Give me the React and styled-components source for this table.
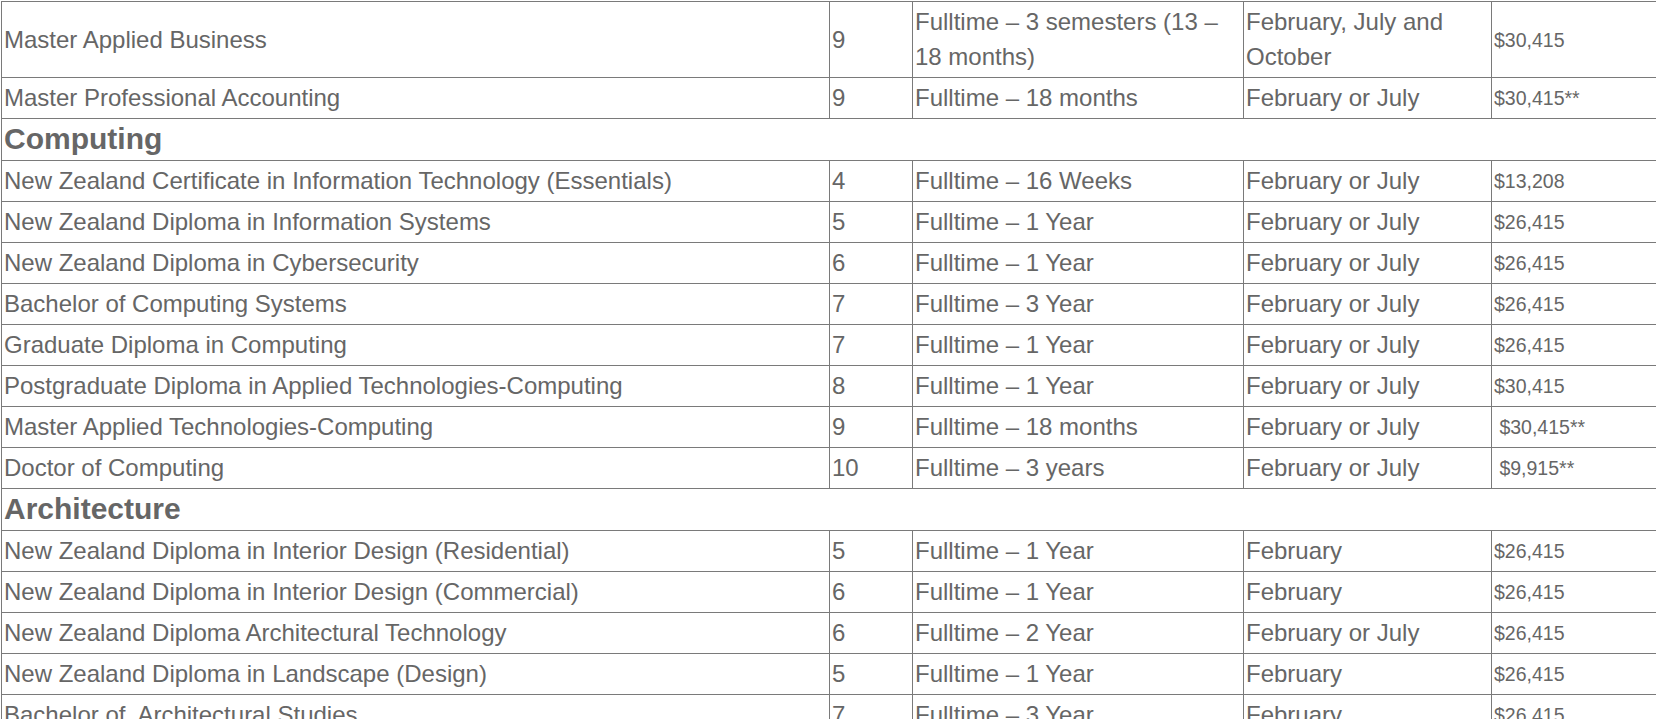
import React from "react";
import styled, { createGlobalStyle } from "styled-components";

const Global = createGlobalStyle`
  html, body {
    margin: 0;
    padding: 0;
    overflow: hidden;
    background: #ffffff;
  }
`;

const Page = styled.div`
  padding: 1px 0 0 1px;
  width: 1800px;
`;

const Table = styled.table`
  border-collapse: collapse;
  table-layout: fixed;
  width: 1750px;
  font-family: "Liberation Sans", Arial, sans-serif;
  color: #666666;
`;

const Col = styled.col`
  width: ${(p) => p.$w}px;
`;

const Cell = styled.td`
  border: 1px solid #7a7a7a;
  padding: 2px 2px 3px 2px;
  font-size: 24px;
  line-height: 35px;
  vertical-align: middle;
  text-align: left;
`;

const PriceCell = styled(Cell)`
  font-size: 19.5px;
  padding-top: 3px;
  padding-bottom: 2px;
`;

const HeadingCell = styled.td`
  border: 1px solid #7a7a7a;
  border-right: none;
  padding: 2px 2px 3px 2px;
  font-size: 30px;
  font-weight: bold;
  line-height: 36px;
  vertical-align: middle;
`;

const rows = [
  { t: "row", name: "Master Applied Business", lvl: "9", dur: "Fulltime – 3 semesters (13 – 18 months)", intake: "February, July and October", fee: "$30,415" },
  { t: "row", name: "Master Professional Accounting", lvl: "9", dur: "Fulltime – 18 months", intake: "February or July", fee: "$30,415**" },
  { t: "head", name: "Computing" },
  { t: "row", name: "New Zealand Certificate in Information Technology (Essentials)", lvl: "4", dur: "Fulltime – 16 Weeks", intake: "February or July", fee: "$13,208" },
  { t: "row", name: "New Zealand Diploma in Information Systems", lvl: "5", dur: "Fulltime – 1 Year", intake: "February or July", fee: "$26,415" },
  { t: "row", name: "New Zealand Diploma in Cybersecurity", lvl: "6", dur: "Fulltime – 1 Year", intake: "February or July", fee: "$26,415" },
  { t: "row", name: "Bachelor of Computing Systems", lvl: "7", dur: "Fulltime – 3 Year", intake: "February or July", fee: "$26,415" },
  { t: "row", name: "Graduate Diploma in Computing", lvl: "7", dur: "Fulltime – 1 Year", intake: "February or July", fee: "$26,415" },
  { t: "row", name: "Postgraduate Diploma in Applied Technologies-Computing", lvl: "8", dur: "Fulltime – 1 Year", intake: "February or July", fee: "$30,415" },
  { t: "row", name: "Master Applied Technologies-Computing", lvl: "9", dur: "Fulltime – 18 months", intake: "February or July", fee: "\u00a0$30,415**" },
  { t: "row", name: "Doctor of Computing", lvl: "10", dur: "Fulltime – 3 years", intake: "February or July", fee: "\u00a0$9,915**" },
  { t: "head", name: "Architecture" },
  { t: "row", name: "New Zealand Diploma in Interior Design (Residential)", lvl: "5", dur: "Fulltime – 1 Year", intake: "February", fee: "$26,415" },
  { t: "row", name: "New Zealand Diploma in Interior Design (Commercial)", lvl: "6", dur: "Fulltime – 1 Year", intake: "February", fee: "$26,415" },
  { t: "row", name: "New Zealand Diploma Architectural Technology", lvl: "6", dur: "Fulltime – 2 Year", intake: "February or July", fee: "$26,415" },
  { t: "row", name: "New Zealand Diploma in Landscape (Design)", lvl: "5", dur: "Fulltime – 1 Year", intake: "February", fee: "$26,415" },
  { t: "row", name: "Bachelor of\u00a0 Architectural Studies", lvl: "7", dur: "Fulltime – 3 Year", intake: "February", fee: "$26,415" },
];

export default function App() {
  return (
    <>
      <Global />
      <Page>
        <Table>
          <colgroup>
            <Col $w={828} />
            <Col $w={83} />
            <Col $w={331} />
            <Col $w={248} />
            <Col $w={260} />
          </colgroup>
          <tbody>
            {rows.map((r, i) =>
              r.t === "head" ? (
                <tr key={i}>
                  <HeadingCell colSpan={5}>{r.name}</HeadingCell>
                </tr>
              ) : (
                <tr key={i}>
                  <Cell>{r.name}</Cell>
                  <Cell>{r.lvl}</Cell>
                  <Cell>{r.dur}</Cell>
                  <Cell>{r.intake}</Cell>
                  <PriceCell>{r.fee}</PriceCell>
                </tr>
              )
            )}
          </tbody>
        </Table>
      </Page>
    </>
  );
}
